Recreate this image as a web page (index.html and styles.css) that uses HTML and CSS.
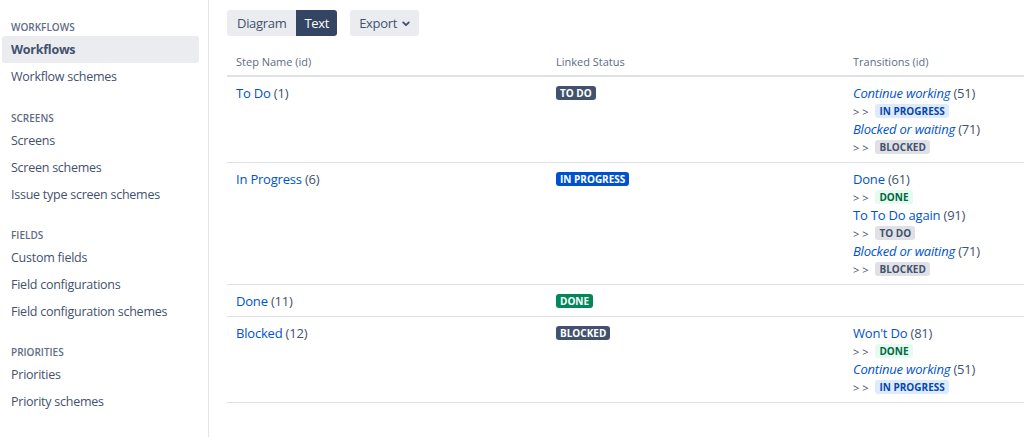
FILE: index.html
```html
<!DOCTYPE html>
<html>
<head>
<meta charset="utf-8">
<link rel="stylesheet" href="styles.css">
</head>
<body>
<div class="page">
  <nav class="sidebar">
    <div class="group first">
      <div class="heading">WORKFLOWS</div>
      <a class="item selected">Workflows</a>
      <a class="item">Workflow schemes</a>
    </div>
    <div class="group">
      <div class="heading">SCREENS</div>
      <a class="item">Screens</a>
      <a class="item">Screen schemes</a>
      <a class="item">Issue type screen schemes</a>
    </div>
    <div class="group">
      <div class="heading">FIELDS</div>
      <a class="item">Custom fields</a>
      <a class="item">Field configurations</a>
      <a class="item">Field configuration schemes</a>
    </div>
    <div class="group">
      <div class="heading">PRIORITIES</div>
      <a class="item">Priorities</a>
      <a class="item">Priority schemes</a>
    </div>
  </nav>
  <main class="main">
    <div class="toolbar">
      <div class="seg">
        <button class="btn">Diagram</button>
        <button class="btn active">Text</button>
      </div>
      <button class="btn export">Export
        <svg class="chev" width="10" height="10" viewBox="0 0 10 10"><path d="M2.2 3.4 L5 6.2 L7.8 3.4" fill="none" stroke="#42526e" stroke-width="1.9" stroke-linecap="round" stroke-linejoin="round"/></svg>
      </button>
    </div>
    <table class="steps">
      <thead>
        <tr><th class="c1">Step Name (id)</th><th class="c2">Linked Status</th><th class="c3">Transitions (id)</th></tr>
      </thead>
      <tbody>
        <tr>
          <td><a class="link">To Do</a> <span class="num">(1)</span></td>
          <td><span class="loz bold-grey">TO DO</span></td>
          <td>
            <div class="line"><a class="link it">Continue working</a> <span class="num">(51)</span></div>
            <div class="line"><span class="arr">&gt; &gt;</span><span class="loz sub-blue">IN PROGRESS</span></div>
            <div class="line"><a class="link it">Blocked or waiting</a> <span class="num">(71)</span></div>
            <div class="line"><span class="arr">&gt; &gt;</span><span class="loz sub-grey">BLOCKED</span></div>
          </td>
        </tr>
        <tr>
          <td><a class="link">In Progress</a> <span class="num">(6)</span></td>
          <td><span class="loz bold-blue">IN PROGRESS</span></td>
          <td>
            <div class="line"><a class="link">Done</a> <span class="num">(61)</span></div>
            <div class="line"><span class="arr">&gt; &gt;</span><span class="loz sub-green">DONE</span></div>
            <div class="line"><a class="link">To To Do again</a> <span class="num">(91)</span></div>
            <div class="line"><span class="arr">&gt; &gt;</span><span class="loz sub-grey">TO DO</span></div>
            <div class="line"><a class="link it">Blocked or waiting</a> <span class="num">(71)</span></div>
            <div class="line"><span class="arr">&gt; &gt;</span><span class="loz sub-grey">BLOCKED</span></div>
          </td>
        </tr>
        <tr>
          <td><a class="link">Done</a> <span class="num">(11)</span></td>
          <td><span class="loz bold-green">DONE</span></td>
          <td></td>
        </tr>
        <tr>
          <td><a class="link">Blocked</a> <span class="num">(12)</span></td>
          <td><span class="loz bold-grey">BLOCKED</span></td>
          <td>
            <div class="line"><a class="link">Won't Do</a> <span class="num">(81)</span></div>
            <div class="line"><span class="arr">&gt; &gt;</span><span class="loz sub-green">DONE</span></div>
            <div class="line"><a class="link it">Continue working</a> <span class="num">(51)</span></div>
            <div class="line"><span class="arr">&gt; &gt;</span><span class="loz sub-blue">IN PROGRESS</span></div>
          </td>
        </tr>
      </tbody>
    </table>
  </main>
</div>
</body>
</html>
```

FILE: styles.css
```css
html, body {
  margin: 0;
  padding: 0;
  background: #fff;
  font-family: "Open Sans", "Noto Sans", sans-serif;
  color: #172b4d;
  font-size: 13px;
}
.page {
  display: flex;
  height: 437px;
  overflow: hidden;
}
.sidebar {
  width: 209px;
  flex: none;
  border-right: 1px solid #e4e6ea;
  padding: 18px 9px 0 2px;
  box-sizing: border-box;
}
.group {
  margin-bottom: 18px;
}
.group.first {
  margin-bottom: 19px;
}
.heading {
  font-size: 10px;
  font-weight: 600;
  color: #5e6c84;
  padding-left: 9px;
  height: 18px;
  line-height: 18px;
}
.item {
  display: block;
  height: 27px;
  line-height: 27px;
  padding-left: 9px;
  color: #42526e;
  font-size: 12.5px;
  letter-spacing: -0.25px;
  border-radius: 3px;
}
.item.selected {
  background: #ebecf0;
  font-weight: 700;
}
.main {
  flex: 1;
  padding: 10px 0 0 18px;
  min-width: 0;
}
.toolbar {
  display: flex;
  gap: 13px;
  height: 26px;
}
.seg {
  display: flex;
}
.btn {
  font-family: inherit;
  font-size: 13px;
  letter-spacing: -0.3px;
  color: #42526e;
  background: #ebecf0;
  border: none;
  height: 26px;
  padding: 0 10px;
  border-radius: 3px;
  display: flex;
  align-items: center;
}
.seg .btn:first-child {
  border-radius: 3px 0 0 3px;
}
.seg .btn.active {
  background: #344563;
  color: #fff;
  border-radius: 0 3px 3px 0;
  padding: 0 8px;
}
.btn.export {
  gap: 4px;
  padding: 0 8px 0 9px;
}
.chev {
  margin-top: 1px;
}
.steps {
  border-collapse: collapse;
  width: 820px;
  margin-top: 12px;
  table-layout: fixed;
}
.steps th {
  text-align: left;
  font-size: 11px;
  font-weight: 400;
  color: #5e6c84;
  padding: 6px 9px 6px;
  height: 12px;
  border-bottom: 2px solid #dfe1e6;
}
.steps th.c1 { width: 302px; }
.steps th.c2 { width: 279px; }
.steps td {
  vertical-align: top;
  padding: 7px 9px 6px;
  border-bottom: 1px solid #dfe1e6;
  line-height: 18px;
  font-size: 13px;
  letter-spacing: -0.2px;
}
.line {
  height: 18px;
  line-height: 18px;
}
.link {
  color: #0052cc;
}
.it {
  font-style: italic;
}
.num {
  color: #42526e;
}
.arr {
  color: #42526e;
  font-size: 11px;
  letter-spacing: 0;
  margin-right: 7px;
}
.loz {
  display: inline-block;
  font-size: 10px;
  letter-spacing: 0;
  font-weight: 700;
  line-height: 14px;
  padding: 0 4px;
  border-radius: 3px;
  vertical-align: 1px;
}
.bold-grey { background: #42526e; color: #fff; }
.bold-blue { background: #0052cc; color: #fff; }
.bold-green { background: #00875a; color: #fff; }
.sub-blue { background: #deebff; color: #0747a6; }
.sub-grey { background: #dfe1e6; color: #42526e; }
.sub-green { background: #e3fcef; color: #006644; }
```
